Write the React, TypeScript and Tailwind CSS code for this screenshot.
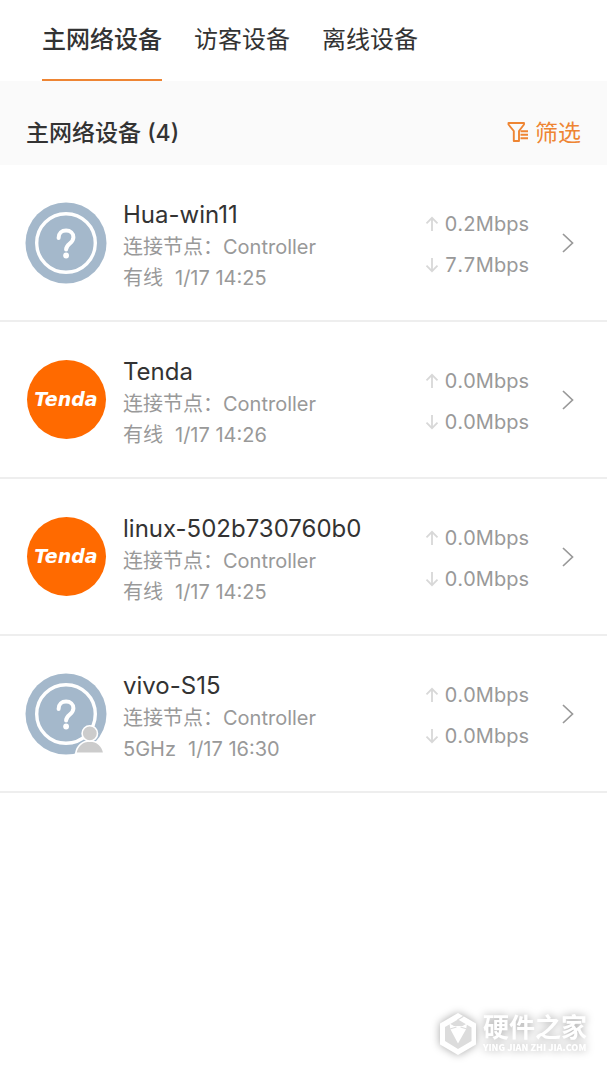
import React, { useState } from 'react';

type Device = {
  name: string;
  node: string;
  link: string;
  time: string;
  up: string;
  down: string;
  icon: 'unknown' | 'tenda';
  guest?: boolean;
};

const TABS = ['主网络设备', '访客设备', '离线设备'];

const DEVICES: Device[] = [
  { name: 'Hua-win11', node: 'Controller', link: '有线', time: '1/17 14:25', up: '0.2Mbps', down: '7.7Mbps', icon: 'unknown' },
  { name: 'Tenda', node: 'Controller', link: '有线', time: '1/17 14:26', up: '0.0Mbps', down: '0.0Mbps', icon: 'tenda' },
  { name: 'linux-502b730760b0', node: 'Controller', link: '有线', time: '1/17 14:25', up: '0.0Mbps', down: '0.0Mbps', icon: 'tenda' },
  { name: 'vivo-S15', node: 'Controller', link: '5GHz', time: '1/17 16:30', up: '0.0Mbps', down: '0.0Mbps', icon: 'unknown', guest: true },
];

const UnknownIcon = ({ guest }: { guest?: boolean }) => (
  <svg viewBox="0 0 82 82" className="size-[82px] shrink-0" aria-hidden="true">
    <circle cx="41" cy="41" r="40.5" fill="#a4b8cb" />
    <circle cx="41" cy="41" r="29.3" fill="none" stroke="#fff" strokeWidth="3.4" />
    <path
      d="M33.6 36c0-4.800 3.200-7.400 7.500-7.400s7.300 2.700 7.300 6.600c0 3-1.500 4.600-3.600 6.400-2.500 2.100-3.700 3.300-3.700 6"
      fill="none"
      stroke="#fff"
      strokeWidth="4"
      strokeLinecap="round"
    />
    <circle cx="41.1" cy="53.5" r="2.9" fill="#fff" />
    {guest && (
      <g fill="#ccc" stroke="#fff" strokeWidth="1.6">
        <path d="M50.8 80.2c1-7.500 6.600-12.200 14-12.200s13 4.700 14 12.200z" />
        <circle cx="64.8" cy="60.4" r="7.7" />
      </g>
    )}
  </svg>
);

const TendaIcon = () => (
  <span className="flex size-[82px] shrink-0 items-center justify-center">
    <span className="flex size-[79px] items-center justify-center rounded-full bg-[#ff6a00] font-['DejaVu_Sans'] text-[19px] font-bold text-white italic">
      Tenda
    </span>
  </span>
);

const Arrow = ({ down }: { down?: boolean }) => (
  <svg viewBox="0 0 14 16" className="h-4 w-3.5" fill="none" stroke="#d8d8d8" strokeWidth="1.8" aria-hidden="true">
    {down ? <path d="M7 1v13M1.500 8.700 7 14.200l5.500-5.500" /> : <path d="M7 15V2M1.500 7.300 7 1.800l5.500 5.500" />}
  </svg>
);

const DeviceRow = ({ device }: { device: Device }) => (
  <li className="border-b-2 border-[#eee]">
    <a href="#device" className="flex h-[155px] items-center pr-8 pl-[25px]">
      {device.icon === 'tenda' ? <TendaIcon /> : <UnknownIcon guest={device.guest} />}
      <div className="ml-4 min-w-0 flex-1 pt-1.5 text-xl leading-[31px] text-[#999]">
        <h2 className="truncate text-2xl leading-[34px] text-[#333]">{device.name}</h2>
        <p>连接节点：{device.node}</p>
        <p className="flex gap-3">
          <span>{device.link}</span>
          <span>{device.time}</span>
        </p>
      </div>
      <div className="pt-1 text-xl leading-[41px] text-[#999] tabular-nums">
        <p className="flex items-center justify-between gap-1.5">
          <Arrow />
          {device.up}
        </p>
        <p className="flex items-center justify-between gap-1.5">
          <Arrow down />
          {device.down}
        </p>
      </div>
      <svg viewBox="0 0 14 22" className="ml-8 h-[22px] w-3.5" fill="none" stroke="#999" strokeWidth="1.7" aria-hidden="true">
        <path d="M2 2l9.500 9L2 20" />
      </svg>
    </a>
  </li>
);

const FilterIcon = () => (
  <svg viewBox="0 0 22 22" className="size-[22px]" fill="none" stroke="currentColor" strokeWidth="1.9" strokeLinejoin="round" aria-hidden="true">
    <path d="M1.500 1h15.500v1.500l-5 6.500v10H6.800v-10l-5.300-6.500z" />
    <path d="M13.500 9.200h7.500M13.500 12.700h7.500M13.500 16.200h7.500" />
  </svg>
);

const Watermark = () => (
  <div className="absolute right-5 bottom-6 flex items-center gap-1.5 text-white drop-shadow-[0_0_4px_rgba(0,0,0,0.35)]">
    <svg viewBox="0 0 38 44" className="h-11 w-[38px]" aria-hidden="true">
      <path d="M19 1 37 11.500v21L19 43 1 32.500v-21z" fill="#fff" />
      <path d="M19 7.500 32.500 15.500v13.500L19 37 6 29V15z" fill="#dcdcdc" />
      <path d="M10.500 11.500l4.500 2.500h8.500l4.500-2.500-.8 5.500-8.200 14.500L11.300 17z" fill="#fff" />
      <path d="M11 17l6.500-2M28 17l-6.500-2M18.500 8l6-3.800" stroke="#dcdcdc" strokeWidth="1.2" />
    </svg>
    <div>
      <p className="text-[26px] leading-7 font-bold">硬件之家</p>
      <p className="font-['Noto_Sans_CJK_SC'] text-[9px] leading-3 font-black">YING JIAN ZHI JIA.COM</p>
    </div>
  </div>
);

const App = () => {
  const [active, setActive] = useState(0);

  return (
    <div className="relative min-h-screen bg-white font-['Inter','Noto_Sans_CJK_SC',sans-serif] text-[#333]">
      {/* 顶部标签 */}
      <nav className="flex gap-8 px-[42px]">
        {TABS.map((tab, index) => (
          <button
            key={tab}
            onClick={() => setActive(index)}
            className={`h-[81px] border-b-2 text-2xl ${index === active ? 'border-[#ee8533] font-medium' : 'border-transparent'}`}
          >
            <span className="block h-20 pt-6">{tab}</span>
          </button>
        ))}
      </nav>

      <main>
        {/* 列表标题 */}
        <header className="flex h-[84px] items-center justify-between bg-[#fafafa] px-[26px] pt-5">
          <h1 className="text-[23px] font-medium">主网络设备 (4)</h1>
          <button className="flex items-center gap-1.5 text-[23px] text-[#ee8533]">
            <FilterIcon />
            筛选
          </button>
        </header>

        <ul>
          {DEVICES.map((device) => (
            <DeviceRow key={device.name} device={device} />
          ))}
        </ul>
      </main>

      <Watermark />
    </div>
  );
};

export default App;
